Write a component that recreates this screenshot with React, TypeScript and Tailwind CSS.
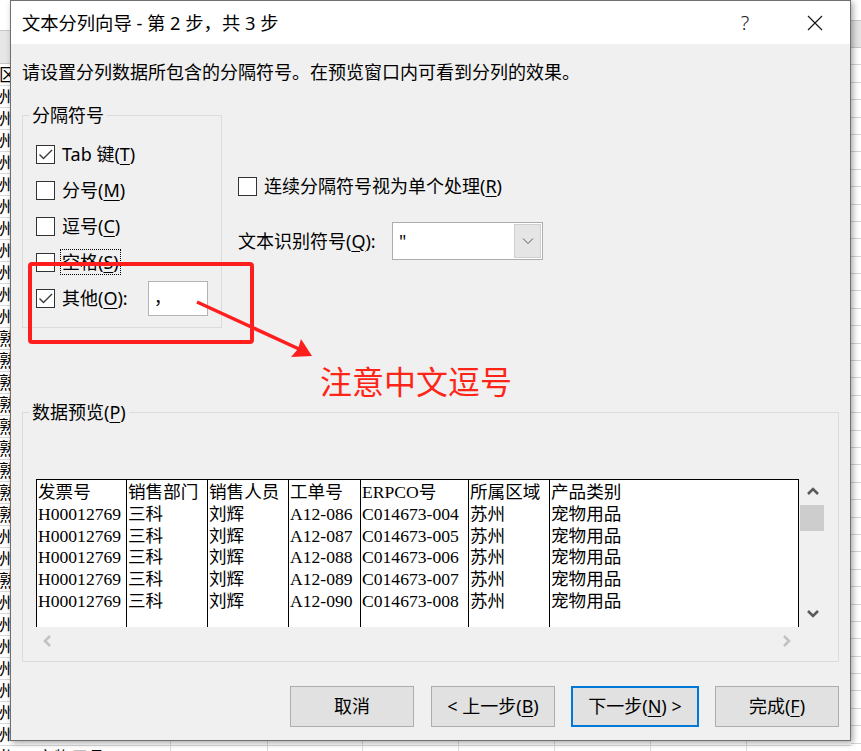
import React from "react";

const ui = "font-[family-name:'Noto_Sans','Noto_Sans_CJK_SC',sans-serif]";
const song = "font-[family-name:'Liberation_Serif','Noto_Sans_CJK_SC',serif]";

function Box({ checked }: { checked?: boolean }) {
  return (
    <span className="w-[19px] h-[19px] border border-[#333333] bg-white flex items-center justify-center shrink-0">
      {checked && (
        <svg width="17" height="17" viewBox="0 0 17 17">
          <path d="M2.5 8.5 L6.5 12.5 L15 4" fill="none" stroke="#3a3a3a" strokeWidth="1.4" />
        </svg>
      )}
    </span>
  );
}

function U({ children }: { children: React.ReactNode }) {
  return <span className="underline underline-offset-[3px] decoration-1">{children}</span>;
}

const leftChars: string[] = [
  "区",
  ...Array(11).fill("州"),
  ...Array(9).fill("熟"),
  "州",
  "州",
  "熟",
  ...Array(8).fill("州"),
];

const cols = [
  { w: "w-[90px]", head: "发票号" },
  { w: "w-[81px]", head: "销售部门" },
  { w: "w-[81px]", head: "销售人员" },
  { w: "w-[72px]", head: "工单号" },
  { w: "w-[108px]", head: "ERPCO号" },
  { w: "w-[81px]", head: "所属区域" },
  { w: "w-[250px] border-r", head: "产品类别" },
];

const rows = [0, 1, 2, 3, 4].map((i) => [
  "H00012769",
  "三科",
  "刘辉",
  `A12-0${86 + i}`,
  `C014673-00${4 + i}`,
  "苏州",
  "宠物用品",
]);

function Chevron({ dir, color }: { dir: "up" | "down" | "left" | "right"; color: string }) {
  const d =
    dir === "up"
      ? "M2 9 L7 4 L12 9"
      : dir === "down"
      ? "M2 4 L7 9 L12 4"
      : dir === "left"
      ? "M9 2 L4 7 L9 12"
      : "M5 2 L10 7 L5 12";
  return (
    <svg width="14" height="14" viewBox="0 0 14 14">
      <path d={d} fill="none" stroke={color} strokeWidth="2.6" />
    </svg>
  );
}

export default function App() {
  return (
    <div className={`relative w-[861px] h-[751px] overflow-hidden bg-white flex text-black ${ui}`}>
      {/* background spreadsheet */}
      <div className="w-[10px] shrink-0 flex flex-col overflow-hidden">
        <div className="h-[30px] shrink-0 bg-white" />
        <div className="h-[34px] shrink-0 bg-[#e6e6e6] border-y border-[#c8c8c8]" />
        {leftChars.map((c, i) => (
          <div
            key={i}
            className="h-[22px] shrink-0 border-b border-[#d9d9d9] flex items-center overflow-hidden"
          >
            <span className="-ml-[1px] text-[17px] leading-none whitespace-nowrap">{c}</span>
          </div>
        ))}
      </div>
      <div className="flex-1 flex flex-col overflow-hidden">
        <div className="h-[741px] shrink-0" />
        <div className="h-[5px] shrink-0 flex border-b border-[#d9d9d9]">
          <div className="w-[161px] border-r border-[#d9d9d9]" />
          <div className="w-[97px] border-r border-[#d9d9d9]" />
          <div className="w-[95px] border-r border-[#d9d9d9]" />
          <div className="w-[96px] border-r border-[#d9d9d9]" />
          <div className="w-[96px] border-r border-[#d9d9d9]" />
          <div className="w-[96px] border-r border-[#d9d9d9]" />
          <div className="w-[96px] border-r border-[#d9d9d9]" />
        </div>
        <div className="h-[22px] shrink-0 flex">
          <div className="w-[161px] border-r border-[#d9d9d9] pl-[27px] pt-[1px] text-[17px] leading-[22px]">
            宠物用品
          </div>
          <div className="w-[97px] border-r border-[#d9d9d9]" />
          <div className="w-[95px] border-r border-[#d9d9d9]" />
          <div className="w-[96px] border-r border-[#d9d9d9]" />
          <div className="w-[96px] border-r border-[#d9d9d9]" />
          <div className="w-[96px] border-r border-[#d9d9d9]" />
          <div className="w-[96px] border-r border-[#d9d9d9]" />
        </div>
      </div>
      <div className="w-[10px] shrink-0 flex flex-col overflow-hidden">
        <div className="h-[20px] shrink-0 bg-white" />
        <div className="h-[28px] shrink-0 bg-[#e4e4e4] border-y border-[#c6c6c6]" />
        {Array.from({ length: 41 }).map((_, i) => (
          <div key={i} className="h-[17.4px] shrink-0 border-b border-[#d4d4d4]" />
        ))}
      </div>

      {/* dialog */}
      <div className="absolute left-[10px] top-0 w-[841px] h-[741px] border border-[#6f6f6f] bg-[#f0f0f0] flex flex-col shadow-[2px_2px_6px_rgba(0,0,0,0.35)] text-[18px]">
        <div className="h-[43px] shrink-0 bg-white flex items-center">
          <div className="flex-1 pl-[11px] leading-[24px] pt-[1px] text-[18.3px]">文本分列向导 - 第 2 步，共 3 步</div>
          <div className="w-[70px] h-full flex items-center justify-center text-[20px] font-light text-[#222]">?</div>
          <div className="w-[70px] h-full flex items-center justify-center">
            <svg width="16" height="16" viewBox="0 0 16 16">
              <path d="M1 1 L15 15 M15 1 L1 15" stroke="#111" strokeWidth="1.1" />
            </svg>
          </div>
        </div>

        <div className="flex-1 flex flex-col">
          <div className="pl-[11px] pt-[16px] leading-[24px]">
            请设置分列数据所包含的分隔符号。在预览窗口内可看到分列的效果。
          </div>

          <div className="flex mt-[20px]">
            <fieldset className="ml-[11px] w-[200px] border border-[#dcdcdc]">
              <legend className="ml-[6px] px-[3px] leading-[22px]">分隔符号</legend>
              <div className="pl-[13px] pt-[10px] pb-[11px] flex flex-col">
                <div className="h-[36px] flex items-center gap-[7px]">
                  <Box checked />
                  <span>
                    Tab 键(<U>T</U>)
                  </span>
                </div>
                <div className="h-[36px] flex items-center gap-[7px]">
                  <Box />
                  <span>
                    分号(<U>M</U>)
                  </span>
                </div>
                <div className="h-[36px] flex items-center gap-[7px]">
                  <Box />
                  <span>
                    逗号(<U>C</U>)
                  </span>
                </div>
                <div className="h-[36px] flex items-center gap-[7px]">
                  <Box />
                  <span className="-ml-[2px] h-[26px] px-[1px] border border-dotted border-black flex items-center">
                    空格(<U>S</U>)
                  </span>
                </div>
                <div className="h-[36px] flex items-center gap-[7px]">
                  <Box checked />
                  <span className="w-[79px]">
                    其他(<U>O</U>):
                  </span>
                  <div className="w-[60px] h-[35px] bg-white border border-[#b4b4b4] flex items-center pl-[5px] text-[17px]">
                    ，
                  </div>
                </div>
              </div>
            </fieldset>

            <div className="ml-[16px] flex flex-col">
              <div className="mt-[64px] h-[36px] flex items-center gap-[7px]">
                <Box />
                <span>
                  连续分隔符号视为单个处理(<U>R</U>)
                </span>
              </div>
              <div className="mt-[18px] h-[38px] flex items-center">
                <span className="w-[154px]">
                  文本识别符号(<U>Q</U>):
                </span>
                <div className="w-[151px] h-[38px] bg-white border border-[#adadad] p-[1px] flex items-center">
                  <span className="pl-[5px] flex-1">"</span>
                  <div className="w-[27px] h-full bg-[#e5e5e5] border border-[#cfcfcf] flex items-center justify-center">
                    <svg width="12" height="8" viewBox="0 0 12 8">
                      <path d="M1 1.5 L6 6.5 L11 1.5" fill="none" stroke="#555" strokeWidth="1" />
                    </svg>
                  </div>
                </div>
              </div>
            </div>
          </div>

          <fieldset className="mt-[73px] ml-[11px] w-[817px] border border-[#dcdcdc]">
            <legend className="ml-[6px] px-[3px] leading-[22px]">
              数据预览(<U>P</U>)
            </legend>
            <div className="pl-[13px] pt-[56px] pb-[6px]">
              <div className="flex flex-col w-[789px]">
                <div className="flex h-[148px]">
                  <div className={`flex w-[763px] h-full bg-white border-t border-black ${song}`}>
                    {cols.map((c, ci) => (
                      <div
                        key={ci}
                        className={`${c.w} h-full border-l border-black pl-[1px] pt-[2px] text-[17.6px] leading-[21.8px] whitespace-nowrap overflow-hidden`}
                      >
                        <div>{c.head}</div>
                        {rows.map((r, ri) => (
                          <div key={ri}>{r[ci]}</div>
                        ))}
                      </div>
                    ))}
                  </div>
                  <div className="w-[26px] flex flex-col">
                    <div className="h-[26px] flex items-center justify-center pl-[2px]">
                      <Chevron dir="up" color="#5a5a5a" />
                    </div>
                    <div className="h-[26px] ml-[1px] w-[24px] bg-[#cdcdcd]" />
                    <div className="flex-1" />
                    <div className="h-[26px] flex items-center justify-center pl-[2px]">
                      <Chevron dir="down" color="#5a5a5a" />
                    </div>
                  </div>
                </div>
                <div className="h-[28px] w-[762px] flex items-center justify-between">
                  <div className="w-[24px] flex justify-center">
                    <Chevron dir="left" color="#c2c2c2" />
                  </div>
                  <div className="w-[24px] flex justify-center">
                    <Chevron dir="right" color="#c2c2c2" />
                  </div>
                </div>
              </div>
            </div>
          </fieldset>

          <div className="mt-[24px] flex justify-end pr-[11px]">
            <button className="w-[124px] h-[41px] bg-[#e1e1e1] border border-[#adadad] flex items-center justify-center">
              取消
            </button>
            <button className="ml-[17px] w-[124px] h-[41px] bg-[#e1e1e1] border border-[#adadad] flex items-center justify-center">
              &lt; 上一步(<U>B</U>)
            </button>
            <button className="ml-[16px] w-[128px] h-[41px] bg-[#e1e1e1] border-2 border-[#0078d7] flex items-center justify-center">
              下一步(<U>N</U>) &gt;
            </button>
            <button className="ml-[16px] w-[124px] h-[41px] bg-[#e1e1e1] border border-[#adadad] flex items-center justify-center">
              完成(<U>F</U>)
            </button>
          </div>
        </div>
      </div>

      {/* red annotation overlay */}
      <div className="absolute left-[28px] top-[262px] w-[226px] h-[82px] border-[4px] border-[#ff1e1e] rounded-[4px] pointer-events-none" />
      <svg className="absolute left-0 top-0 pointer-events-none" width="861" height="751" viewBox="0 0 861 751">
        <line x1="197" y1="302" x2="299" y2="349" stroke="#ff1e1e" strokeWidth="3.5" />
        <polygon points="312,356 301,339 298,349 291,357" fill="#ff1e1e" />
      </svg>
      <div className="absolute left-[320px] top-[361px] text-[32px] leading-[38px] text-[#ff2418] font-[family-name:'Noto_Sans_CJK_SC',sans-serif]">
        注意中文逗号
      </div>
    </div>
  );
}
